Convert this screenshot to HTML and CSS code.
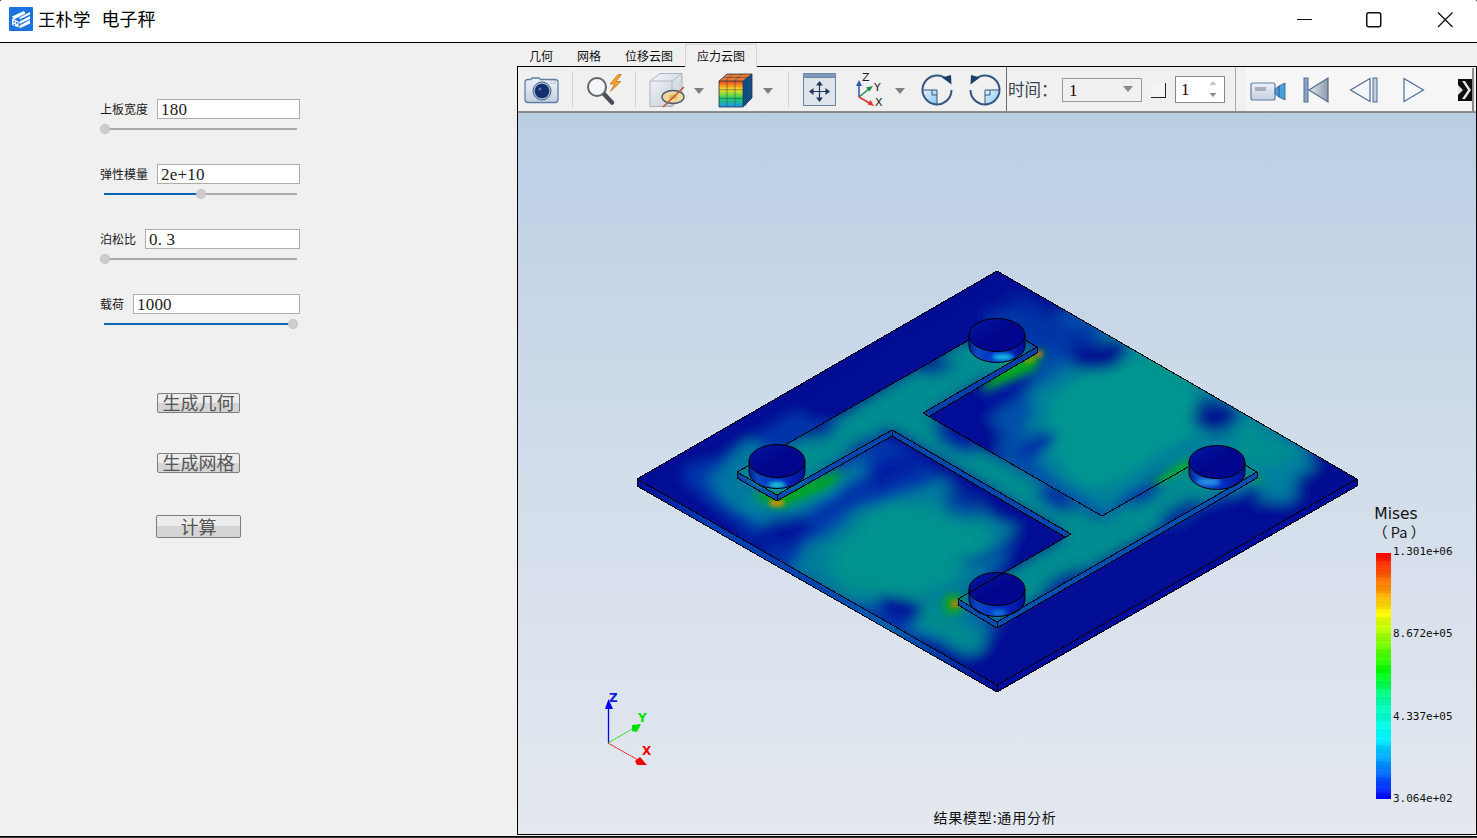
FILE: index.html
```html
<!DOCTYPE html>
<html lang="zh">
<head>
<meta charset="utf-8">
<title>王朴学 电子秤</title>
<link rel="stylesheet" href="styles.css">
</head>
<body>
<div class="window">
  <header class="titlebar">
    <svg class="logo" width="24" height="24" viewBox="0 0 24 24">
      <rect width="24" height="24" rx="1" fill="#1a73e0"/>
      <path d="M3 9.500 15 4l1.500 2.500L5 12.500z" fill="#fff"/>
      <path d="M3 11.500l6.500 3v6L3 18z" fill="#fff"/>
      <path d="M10.500 14.500 21 9v3l-10.500 5z" fill="#fff"/>
      <path d="M10.500 10.500 21 5v2.500l-10.500 5z" fill="#fff"/>
      <path d="M10.500 18.500 21 13v3.500l-10.500 5z" fill="#fff"/>
      <path d="M4.500 13.500l1.500.8v1.600l-1.500-.8zM7 14.800l1.500.8v1.600L7 16.400zM4.500 16.500l1.500.8v1.400l-1.500-.8z" fill="#1a73e0"/>
    </svg>
    <h1 class="title"><span>王朴学</span><span class="title-app">电子秤</span></h1>
    <div class="winbtns">
      <svg class="winbtn" width="71" height="42" viewBox="0 0 71 42"><path d="M28 19.500h15" stroke="#111" fill="none"/></svg>
      <svg class="winbtn" width="71" height="42" viewBox="0 0 71 42"><rect x="26.750" y="12.750" width="14" height="14" rx="2" stroke="#111" stroke-width="1.500" fill="none"/></svg>
      <svg class="winbtn" width="71" height="42" viewBox="0 0 71 42"><path d="M27 12.500 41.500 27M41.500 12.500 27 27" stroke="#111" stroke-width="1.300" fill="none"/></svg>
    </div>
  </header>

  <main class="content">
    <section class="form">
      <div class="param">
        <div class="param-row"><label class="param-label">上板宽度</label><div class="param-input">180</div></div>
        <div class="slider" style="--v:0"><div class="slider-fill"></div><div class="slider-knob"></div></div>
      </div>
      <div class="param">
        <div class="param-row"><label class="param-label">弹性模量</label><div class="param-input">2e+10</div></div>
        <div class="slider" style="--v:.51"><div class="slider-fill"></div><div class="slider-knob"></div></div>
      </div>
      <div class="param">
        <div class="param-row"><label class="param-label">泊松比</label><div class="param-input">0.&nbsp;3</div></div>
        <div class="slider" style="--v:0"><div class="slider-fill"></div><div class="slider-knob"></div></div>
      </div>
      <div class="param">
        <div class="param-row"><label class="param-label">载荷</label><div class="param-input">1000</div></div>
        <div class="slider" style="--v:1"><div class="slider-fill"></div><div class="slider-knob"></div></div>
      </div>
      <div class="actions">
        <button class="action">生成几何</button>
        <button class="action">生成网格</button>
        <button class="action action-wide">计算</button>
      </div>
    </section>

    <section class="results">
      <nav class="tabs">
        <span class="tab">几何</span><span class="tab">网格</span><span class="tab tab-long">位移云图</span><span class="tab tab-long tab-active">应力云图</span>
      </nav>
      <div class="frame">
        <div class="toolbar">
          <!-- camera -->
          <svg class="tool" width="54" height="44" viewBox="518 67 54 44">
            <defs>
              <linearGradient id="gBody" x1="0" y1="0" x2="0" y2="1"><stop offset="0" stop-color="#eef2f8"/><stop offset="1" stop-color="#c4d0e0"/></linearGradient>
              <linearGradient id="gFace" x1="0" y1="0" x2="1" y2="1"><stop offset="0" stop-color="#f4f5f7"/><stop offset="1" stop-color="#c2cad6"/></linearGradient>
              <linearGradient id="gHot" x1="0" y1="0" x2="0" y2="1"><stop offset="0" stop-color="#f04020"/><stop offset=".33" stop-color="#f8e020"/><stop offset=".66" stop-color="#20d060"/><stop offset="1" stop-color="#2090f0"/></linearGradient>
              <linearGradient id="gTri" x1="0" y1="0" x2="1" y2="0"><stop offset="0" stop-color="#e4e8ee"/><stop offset="1" stop-color="#8f9aa8"/></linearGradient>
              <linearGradient id="gSky" x1="0" y1="0" x2="1" y2="1"><stop offset="0" stop-color="#e6f3fc"/><stop offset="1" stop-color="#86c4ec"/></linearGradient>
            </defs>
            <path d="M525 82.500q0-3 3-3h3l1-1.500h7l1.500 1.500h14.500q3 0 3 3v17q0 3-3 3h-27q-3 0-3-3z" fill="url(#gBody)" stroke="#5f7ea6" stroke-width="1.300"/>
            <rect x="551" y="81" width="4" height="2.500" fill="#fff" stroke="#8ea2bd" stroke-width=".6"/>
            <circle cx="542" cy="91" r="9" fill="#aebdd2" stroke="#41608f" stroke-width="1"/>
            <circle cx="542" cy="91" r="7.300" fill="#14306c"/>
            <circle cx="540" cy="89" r="1.500" fill="#5577aa"/>
          </svg>
          <span class="tool-sep"></span>
          <!-- magnifier -->
          <svg class="tool" width="62" height="44" viewBox="573 67 62 44">
            <path d="M603.500 93.500 612 102.500" stroke="#4b4f55" stroke-width="4.500" stroke-linecap="round"/>
            <circle cx="597" cy="87" r="9" fill="#f5f6f8" stroke="#61666c" stroke-width="2"/>
            <path d="M618 74.500 610 84h4.500l-4 7.500 10.500-10h-5l5.500-7z" fill="#f0a030" stroke="#c87a10" stroke-width=".8"/>
          </svg>
          <span class="tool-sep"></span>
          <!-- section cube -->
          <svg class="tool" width="76" height="44" viewBox="636 67 76 44">
            <path d="M650 81 660 73.500h22v24L672 106.500h-22z" fill="url(#gFace)" stroke="#a9b2be"/>
            <path d="M650 81h22l10-7.500M672 81v25.500" fill="none" stroke="#b2bac6"/>
            <ellipse cx="673" cy="97" rx="11" ry="6.500" fill="#f0d898" stroke="#44587c" stroke-width="1.300"/>
            <ellipse cx="673" cy="97" rx="4" ry="2.500" fill="#d8b860"/>
            <path d="M663 107 684 87" stroke="#c8502a" stroke-width="1.500"/>
            <path d="M694 88h10l-5 6z" fill="#7c7f84"/>
          </svg>
          <!-- colour cube -->
          <svg class="tool" width="76" height="44" viewBox="712 67 76 44">
            <path d="M719 81h24v26h-24z" fill="url(#gHot)"/>
            <path d="M719 81 727 74h25l-9 7z" fill="#ea7a30"/>
            <path d="M743 81 752 74v24l-9 9z" fill="#10508a"/>
            <path d="M727 81v26M735 81v26M719 89.700h24M719 98.300h24M724 77.500h24M733 74l-8 7M742 74l-8 7M746 87.500l6-6M746 80v26M746 96l6-6" stroke="#2a3a50" stroke-width=".5" fill="none"/>
            <path d="M719 81h24v26h-24zM719 81 727 74h25v24l-9 9M743 81l9-7" fill="none" stroke="#25344a" stroke-width=".8"/>
            <path d="M763 88h10l-5 6z" fill="#7c7f84"/>
          </svg>
          <span class="tool-sep"></span>
          <!-- fit -->
          <svg class="tool" width="58" height="44" viewBox="789 67 58 44">
            <rect x="803.500" y="73.500" width="32" height="32" fill="#dfe3ea" stroke="#6c84a6"/>
            <rect x="803.500" y="73.500" width="32" height="4" fill="#7f98bb" stroke="#6c84a6"/>
            <path d="M812 91.500h15M819.500 84v15" stroke="#23395c" stroke-width="1.200"/>
            <path d="M819.500 81 823 85.500h-7zM819.500 102 823 97.500h-7zM809 91.500 813.500 88v7zM830 91.500 825.500 88v7z" fill="#23395c"/>
          </svg>
          <!-- axes -->
          <svg class="tool" width="68" height="44" viewBox="847 67 68 44">
            <path d="M859 97V84" stroke="#2a58b0" stroke-width="1.500"/><path d="M859 80l-3 6h6z" fill="#2a58b0"/>
            <path d="M859 97 869 89" stroke="#1b8a4a" stroke-width="1.500"/><path d="M873 86l-7 1.500 3.500 4z" fill="#1b8a4a"/>
            <path d="M859 97 870 103.500" stroke="#e03030" stroke-width="1.500"/><path d="M874 106l-3.500-6-3 4.500z" fill="#e03030"/>
            <text x="862" y="81" class="tool-axis">Z</text><text x="874" y="91" class="tool-axis">Y</text><text x="875" y="106" class="tool-axis">X</text>
            <path d="M895 88h10l-5 6z" fill="#7c7f84"/>
          </svg>
          <!-- rotate cw -->
          <svg class="tool" width="46" height="44" viewBox="915 67 46 44">
            <path d="M937 90H922.500A14.500 14.500 0 0 0 937 104.500z" fill="url(#gSky)"/>
            <path d="M946.500 79A14.500 14.500 0 1 0 951.500 90" fill="none" stroke="#35567f" stroke-width="2"/>
            <path d="M922.500 90H937V104.500M932 90v5h5" fill="none" stroke="#35567f" stroke-width="1"/>
            <path d="M951.500 84.500 951 75 942 77.500z" fill="#1f3d6b"/>
          </svg>
          <!-- rotate ccw -->
          <svg class="tool" width="45" height="44" viewBox="961 67 45 44">
            <path d="M985 90H999.500A14.500 14.500 0 0 1 985 104.500z" fill="url(#gSky)"/>
            <path d="M975.500 79A14.500 14.500 0 1 1 970.500 90" fill="none" stroke="#35567f" stroke-width="2"/>
            <path d="M999.500 90H985V104.500M990 90v5h-5" fill="none" stroke="#35567f" stroke-width="1"/>
            <path d="M970.500 84.500 971 75 980 77.500z" fill="#1f3d6b"/>
          </svg>
          <span class="tool-sep tool-sep-dark"></span>
          <span class="time-label">时间：</span>
          <div class="combo">1<svg class="combo-arrow" width="10" height="6" viewBox="0 0 10 6"><path d="M0 0h10L5 6z" fill="#85888c"/></svg></div>
          <span class="check"></span>
          <div class="spin">1<svg class="spin-arrows" width="8" height="18" viewBox="0 0 8 18"><path d="M4 1 7.500 5h-7z" fill="#c4c4c4"/><path d="M4 17 7.500 13h-7z" fill="#8c8c8c"/></svg></div>
          <span class="tool-sep tool-sep-last"></span>
          <div class="player">
            <svg width="226" height="43" viewBox="1246 68 226 43">
              <defs><filter id="bMore"><feGaussianBlur stdDeviation=".7"/></filter></defs>
              <rect x="1251" y="83" width="24" height="17" rx="2" fill="url(#gBody)" stroke="#5f7ea6" stroke-width="1.200"/>
              <rect x="1255" y="87" width="11" height="4" fill="#a9b0ba"/>
              <path d="M1275 89 1279 86v11l-4-3zM1279 86 1285 83v17l-6-3z" fill="#4aa0d8" stroke="#3a6a9c" stroke-width=".9"/>
              <rect x="1304" y="78" width="4" height="24" fill="#8ea4c2" stroke="#4f6c93"/>
              <path d="M1309 90 1328 78v24z" fill="url(#gTri)" stroke="#4f6c93" stroke-width="1.200"/>
              <path d="M1350.500 90 1370 78.500v23z" fill="#f4f6f9" stroke="#4f6c93" stroke-width="1.200"/>
              <rect x="1373" y="78" width="4" height="24" fill="#c4d0e0" stroke="#4f6c93"/>
              <path d="M1404 78.500 1423.500 90 1404 101.500z" fill="#f4f6f9" stroke="#4f6c93" stroke-width="1.200"/>
              <g filter="url(#bMore)">
                <rect x="1458" y="79" width="14" height="22" fill="#0a0a0a"/>
                <path d="M1458 85 1463 90 1458 95zM1462 81 1468 90 1462 99 1465 99 1471 90 1465 81z" fill="#e4e4e4"/>
              </g>
            </svg>
          </div>
        </div>

        <div class="viewport">
          <svg class="scene" width="957" height="721" viewBox="518 113 957 721">
            <defs>
              <clipPath id="cPlate"><path d="M997 271 1357 479 997 685 637 479z"/></clipPath>
              <clipPath id="cTrace"><path d="M785 445 969 340 1025 340 1037 347 923 413 1102 516 1188 467 1245 465 1257 472 997 622 958 599 1071 534 892 430 777 495 737 472z"/></clipPath>
              <filter id="cloud" x="-10%" y="-10%" width="120%" height="120%">
                <feTurbulence type="fractalNoise" baseFrequency=".014 .026" numOctaves="2" seed="7" result="n"/>
                <feGaussianBlur in="SourceGraphic" stdDeviation="5" result="b"/>
                <feDisplacementMap in="b" in2="n" scale="26" xChannelSelector="R" yChannelSelector="G" result="d"/>
                <feGaussianBlur in="d" stdDeviation="5"/>
              </filter>
              <filter id="b8" x="-50%" y="-50%" width="200%" height="200%"><feGaussianBlur stdDeviation="7"/></filter>
              <filter id="b4" x="-50%" y="-50%" width="200%" height="200%"><feGaussianBlur stdDeviation="4"/></filter>
              <filter id="b2" x="-50%" y="-50%" width="200%" height="200%"><feGaussianBlur stdDeviation="2"/></filter>
              <linearGradient id="gLeftEdge" x1="0" y1="0" x2="1" y2="0">
                <stop offset="0" stop-color="#000c98"/><stop offset=".2" stop-color="#0040b8"/><stop offset=".5" stop-color="#0044b0"/><stop offset=".7" stop-color="#0060b0"/><stop offset="1" stop-color="#000c9c"/>
              </linearGradient>
              <linearGradient id="gCyl" x1="0" y1="0" x2="1" y2="0">
                <stop offset="0" stop-color="#002098"/><stop offset=".15" stop-color="#0a48c0"/><stop offset=".5" stop-color="#0030c8"/><stop offset=".85" stop-color="#001aa8"/><stop offset="1" stop-color="#000c90"/>
              </linearGradient>
              <linearGradient id="gCap" x1="0" y1="0" x2="1" y2="1">
                <stop offset="0" stop-color="#0018a0"/><stop offset=".5" stop-color="#00068c"/><stop offset="1" stop-color="#000890"/>
              </linearGradient>
            </defs>

            <path d="M637 479 997 685V692L637 486z" fill="url(#gLeftEdge)"/>
            <path d="M997 685 1357 479V486L997 692z" fill="#000c9c"/>

            <!-- plate stress field -->
            <g clip-path="url(#cPlate)">
              <g filter="url(#cloud)">
                <rect x="600" y="240" width="790" height="480" fill="#000a94"/>
                <!-- mid blue -->
                <path d="M680 480 790 415 900 440 1000 540 1010 650 900 640 790 570z" fill="#0034aa"/>
                <path d="M985 345 1080 305 1180 355 1310 445 1215 505 1100 535 1000 470z" fill="#0050a8"/>
                <path d="M1015 300 1100 330 1040 365 985 320z" fill="#0034a8"/>
                <!-- blue-teal -->
                <path d="M1030 395 1120 315 1205 355 1310 450 1240 478 1180 475 1100 510 1020 445z" fill="#00809a"/>
                <path d="M805 545 880 495 935 485 1020 530 970 595 900 618 790 575z" fill="#007c9a"/>
                <path d="M790 560 880 605 960 650 1008 642 965 598 880 578z" fill="#007c9a"/>
                <path d="M708 484 745 440 810 465 870 462 810 516 760 530z" fill="#0078a0"/>
                <path d="M1238 436 1310 456 1290 500 1230 515z" fill="#0080a0"/>
                <!-- teal core -->
                <path d="M1045 412 1105 350 1180 372 1210 425 1150 462 1085 482 1038 442z" fill="#009690"/>
                <path d="M1120 322 1160 340 1225 388 1170 385z" fill="#00928e"/>
                <path d="M1235 420 1300 450 1265 475 1228 465z" fill="#008e90"/>
                <path d="M828 548 890 502 950 505 998 535 950 585 890 600 822 572z" fill="#00928e"/>
                <path d="M825 582 880 596 950 638 990 642 950 608 880 585z" fill="#008a8e"/>
                <path d="M740 502 790 516 868 468 800 478z" fill="#008e90"/>
                <!-- cold spots -->
                <ellipse cx="1098" cy="350" rx="32" ry="14" transform="rotate(-12 1098 350)" fill="#000a90"/>
                <ellipse cx="1218" cy="418" rx="28" ry="13" transform="rotate(-8 1218 418)" fill="#000a90"/>
                <ellipse cx="1330" cy="480" rx="36" ry="19" fill="#000a90"/>
                <ellipse cx="897" cy="605" rx="24" ry="12" transform="rotate(20 897 605)" fill="#000a98"/>
                <ellipse cx="785" cy="533" rx="30" ry="10" transform="rotate(-18 785 533)" fill="#000a98"/>
                <ellipse cx="895" cy="466" rx="34" ry="10" transform="rotate(-28 895 466)" fill="#001aa2"/>
                <ellipse cx="962" cy="507" rx="20" ry="6" transform="rotate(24 962 507)" fill="#001aa2"/>
                <ellipse cx="985" cy="555" rx="30" ry="5" transform="rotate(-28 985 555)" fill="#0014a0"/>
                <ellipse cx="1035" cy="445" rx="24" ry="9" transform="rotate(-24 1035 445)" fill="#0020a4"/>
                <ellipse cx="1140" cy="490" rx="34" ry="6" transform="rotate(-28 1140 490)" fill="#0020a4"/>
                <ellipse cx="985" cy="405" rx="50" ry="12" transform="rotate(-28 985 405)" fill="#000e9a"/>
                <ellipse cx="1068" cy="608" rx="115" ry="25" transform="rotate(-30 1068 608)" fill="#000a94"/>
                <ellipse cx="1195" cy="535" rx="80" ry="19" transform="rotate(-30 1195 535)" fill="#000a94"/>
                <path d="M790 400 900 340 990 290 1000 270 770 395z" fill="#000a90"/>
              </g>
              <g filter="url(#b4)">
                <path d="M752 494 778 508 832 484 845 470 790 488z" fill="#00a818"/>
                <path d="M1046 348 1034 370 980 392 1000 368z" fill="#00a818"/>
                <ellipse cx="953" cy="604" rx="9" ry="10" fill="#12a810"/>
                <path d="M1150 484 1188 458 1192 472 1170 486z" fill="#00a830"/>
                <ellipse cx="1258" cy="480" rx="5" ry="4" fill="#10a040"/>
                <ellipse cx="1190" cy="478" rx="5" ry="7" fill="#00a040"/>
                <path d="M968 350 1000 368 1025 360 1000 350z" fill="#00a070"/>
              </g>
              <g filter="url(#b2)">
                <ellipse cx="777" cy="503" rx="8" ry="3.500" fill="#d09000"/>
                <ellipse cx="955" cy="604" rx="3" ry="3.500" fill="#e07010"/>
                <ellipse cx="1039" cy="354" rx="3.500" ry="3" fill="#e07010"/>
                <ellipse cx="1030" cy="360" rx="6" ry="3" transform="rotate(-30 1030 360)" fill="#80a000"/>
              </g>
            </g>

            <!-- raised trace -->
            <g clip-path="url(#cTrace)">
              <g filter="url(#b8)">
                <path d="M730 470 800 440 960 340 1040 345 930 415 1100 520 1190 465 1260 470 997 625 960 600 1065 535 890 430 777 500z" fill="#008c90"/>
                <ellipse cx="816" cy="430" rx="22" ry="8" transform="rotate(-10 816 430)" fill="#000e96"/>
                <ellipse cx="936" cy="366" rx="18" ry="7" transform="rotate(-10 936 366)" fill="#000e96"/>
                <ellipse cx="862" cy="447" rx="18" ry="6" transform="rotate(-30 862 447)" fill="#000e96"/>
                <ellipse cx="955" cy="440" rx="24" ry="9" transform="rotate(28 955 440)" fill="#001aa0"/>
                <ellipse cx="1055" cy="500" rx="20" ry="8" transform="rotate(28 1055 500)" fill="#001aa0"/>
                <ellipse cx="1063" cy="582" rx="22" ry="7" transform="rotate(-30 1063 582)" fill="#000e96"/>
                <ellipse cx="1180" cy="512" rx="24" ry="7" transform="rotate(-30 1180 512)" fill="#000e96"/>
                <ellipse cx="1145" cy="495" rx="16" ry="6" transform="rotate(-30 1145 495)" fill="#001aa0"/>
              </g>
            </g>

            <!-- walls -->
            <path d="M737 472 777 495 892 430 1071 534 1065 537.500 892 436 777 501 737 478z" fill="#0048b0"/>
            <path d="M958 599 997 622 1257 472V478L997 628 958 605z" fill="#0050b4"/>
            <path d="M1037 347 923 413 929 416.500 1037 353z" fill="#0040ac"/>

            <!-- cylinders -->
            <g transform="translate(777 461)">
              <ellipse cx="0" cy="12" rx="31" ry="18" fill="#0080a0" filter="url(#b2)"/>
              <path d="M-28 0V11A28 16.500 0 0 0 28 11V0z" fill="url(#gCyl)"/>
              <ellipse cx="0" cy="24" rx="9" ry="3" fill="#20d8d8" filter="url(#b2)"/>
              <ellipse cx="0" cy="0" rx="28" ry="16.500" fill="url(#gCap)" stroke="#000"/>
              <path d="M-28 0V11A28 16.500 0 0 0 28 11V0" fill="none" stroke="#000"/>
            </g>
            <g transform="translate(997 335)">
              <path d="M-28 0V11A28 16.500 0 0 0 28 11V0z" fill="url(#gCyl)"/>
              <ellipse cx="6" cy="22" rx="11" ry="3.500" fill="#18c0e8" filter="url(#b2)"/>
              <ellipse cx="0" cy="0" rx="28" ry="16.500" fill="url(#gCap)" stroke="#000"/>
              <path d="M-28 0V11A28 16.500 0 0 0 28 11V0" fill="none" stroke="#000"/>
            </g>
            <g transform="translate(1217 462)">
              <path d="M-28 0V11A28 16.500 0 0 0 28 11V0z" fill="url(#gCyl)"/>
              <ellipse cx="-8" cy="20" rx="12" ry="3.500" fill="#30a8e8" opacity=".85" filter="url(#b2)"/>
              <ellipse cx="0" cy="0" rx="28" ry="16.500" fill="url(#gCap)" stroke="#000"/>
              <path d="M-28 0V11A28 16.500 0 0 0 28 11V0" fill="none" stroke="#000"/>
            </g>
            <g transform="translate(997 589)">
              <path d="M-28 0V11A28 16.500 0 0 0 28 11V0z" fill="url(#gCyl)"/>
              <ellipse cx="2" cy="24" rx="8" ry="2.500" fill="#20b0e0" opacity=".7" filter="url(#b2)"/>
              <ellipse cx="0" cy="0" rx="28" ry="16.500" fill="url(#gCap)" stroke="#000"/>
              <path d="M-28 0V11A28 16.500 0 0 0 28 11V0" fill="none" stroke="#000"/>
            </g>

            <!-- edges -->
            <g class="edges">
              <path d="M637 479 997 271 1357 479 997 685z"/>
              <path d="M637 479V486L997 692 1357 486V479M997 685V692"/>
              <path d="M750 465 737 472 777 495 892 430 1071 534 1005 572 958 599 997 622 1257 472 1245 465"/>
              <path d="M737 472V478L777 501 892 436 1065 537M892 430V436M777 495V501M958 599V605L997 628 1257 478V472M997 622V628"/>
              <path d="M785 445 969 340M1025 340 1037 347V353L929 416.500M1037 347 923 413 1102 516 1188 467"/>
            </g>

            <!-- triad -->
            <g class="triad">
              <path d="M608.500 743V705" stroke="#0000f0" stroke-width="1.300"/>
              <path d="M608.500 699 605 709h8z" fill="#0000f0"/>
              <path d="M608 743 634 728" stroke="#00e000" stroke-width="1" stroke-dasharray="2 .5"/>
              <path d="M632 725 641 724 637 732 632 731z" fill="#00e000"/>
              <path d="M608 743 638 760" stroke="#f00000" stroke-width="1" stroke-dasharray="2 .5"/>
              <path d="M640 757 647 765H637L635 761z" fill="#f00000"/>
              <text x="609" y="702" fill="#1020e0">Z</text>
              <text x="638" y="722" fill="#00e000">Y</text>
              <text x="642" y="755" fill="#f00000">X</text>
            </g>
          </svg>

          <div class="legend">
            <div class="legend-title">Mises<br><span class="legend-unit">（ Pa ）</span></div>
            <div class="legend-scale">
              <div class="legend-bar"></div>
              <ul class="legend-ticks">
                <li>1.301e+06</li><li>8.672e+05</li><li>4.337e+05</li><li>3.064e+02</li>
              </ul>
            </div>
          </div>
          <div class="model-name">结果模型:通用分析</div>
        </div>
      </div>
    </section>
  </main>
</div>
</body>
</html>
```

FILE: styles.css
```css
* { box-sizing: border-box; }
html, body { margin: 0; padding: 0; height: 100%; }
body {
  background: #333;
  font-family: "Noto Sans CJK SC", "Liberation Sans", sans-serif;
  overflow: hidden;
}
.window {
  width: 1477px;
  height: 837px;
  display: flex;
  flex-direction: column;
  background: #f0f0f0;
  border-radius: 3px 3px 0 0;
  border-bottom: 1px solid #000;
  overflow: hidden;
}

/* title bar */
.titlebar {
  flex: 0 0 43px;
  display: flex;
  align-items: flex-start;
  background: #fff;
  border-bottom: 1px solid #000;
}
.logo { margin: 7px 0 0 9px; flex: none; }
.title {
  margin: 5px 0 0 5px;
  display: flex;
  gap: 11px;
  font-size: 17.500px;
  font-weight: 400;
  line-height: 27px;
  color: #000;
}
.title-app { font-size: 18px; }
.winbtns { margin-left: auto; margin-right: -5px; display: flex; flex: none; }
.winbtn { display: block; }

.content { flex: 1; display: flex; min-height: 0; }

/* left form */
.form {
  flex: 0 0 517px;
  padding: 56px 0 0 100px;
}
.param { height: 65px; width: 200px; }
.param-row { display: flex; align-items: center; gap: 9px; height: 20px; }
.param-label { font-size: 12px; line-height: 20px; color: #1a1a1a; white-space: nowrap; }
.param-input {
  flex: 1;
  height: 20px;
  background: #fff;
  border: 1px solid #adadad;
  padding-left: 3px;
  font-family: "Liberation Serif", serif;
  font-size: 17px;
  letter-spacing: .2px;
  line-height: 20px;
  color: #222;
  white-space: pre;
}
.slider { position: relative; height: 10px; margin-top: 5px; width: 198px; }
.slider::before {
  content: "";
  position: absolute;
  left: 4px;
  right: 1px;
  top: 4px;
  height: 2px;
  background: #aaa;
}
.slider-fill {
  position: absolute;
  left: 4px;
  top: 4px;
  height: 2px;
  width: calc(var(--v) * 188px + 1px);
  background: #0a66b8;
}
.slider-knob {
  position: absolute;
  top: 0;
  left: calc(var(--v) * 188px);
  width: 10px;
  height: 10px;
  border-radius: 50%;
  background: #cdcdcd;
  border: 1px dotted #b8b8b8;
}
.actions {
  display: flex;
  flex-direction: column;
  align-items: flex-start;
  margin-top: 34px;
  padding-left: 57px;
}
.action {
  width: 83px;
  height: 20px;
  margin: 0 0 40px;
  padding: 0 0 2px;
  border: 1px solid #7d7d7d;
  border-radius: 2px;
  background: linear-gradient(#ececec 0 50%, #d4d4d4 50% 100%);
  font-family: "Noto Sans CJK SC", sans-serif;
  font-size: 18px;
  line-height: 16px;
  color: #555;
  white-space: nowrap;
}
.action:nth-child(2) { margin-bottom: 42px; }
.action-wide { width: 85px; height: 23px; margin: 0 0 0 -1px; }

/* right */
.results { flex: 1; display: flex; flex-direction: column; min-width: 0; }
.tabs { flex: 0 0 23px; display: flex; align-items: flex-end; position: relative; }
.tab {
  width: 48px;
  height: 21px;
  text-align: center;
  font-size: 12px;
  line-height: 21px;
  color: #111;
  position: relative;
}
.tab-long { width: 72px; }
.tab-active {
  height: 23px;
  line-height: 22px;
  top: 1px;
  background: #f0f0f0;
  border: 1px solid #d4d4d4;
  border-bottom: 0;
  z-index: 1;
}
.frame {
  flex: 1;
  display: flex;
  flex-direction: column;
  min-height: 0;
  margin: 0 0 1px 0;
  border: 1px solid #000;
  background: #f0f0f0;
}
.toolbar {
  flex: 0 0 46px;
  min-height: 0;
  display: flex;
  align-items: flex-start;
  background: #f0f0f0;
  border-bottom: 2px solid #8c8c8c;
  position: relative;
}
.tool { display: block; flex: none; }
.tool-sep {
  flex: none;
  width: 1px;
  height: 36px;
  margin-top: 4px;
  background: #d0d0d0;
}
.tool-sep-dark { height: 44px; margin-top: 0; background: #6c6c6c; }
.tool-axis { font-family: "DejaVu Sans", sans-serif; font-size: 11px; fill: #222; }
.time-label {
  margin: 1px 0 0 1px;
  width: 54px;
  flex: none;
  font-size: 16.500px;
  line-height: 43px;
  color: #3b4550;
  white-space: nowrap;
}
.combo {
  flex: none;
  width: 80px;
  height: 24px;
  margin-top: 11px;
  border: 1px solid #989898;
  padding-left: 6px;
  font-family: "Liberation Serif", serif;
  font-size: 17px;
  line-height: 23px;
  color: #300;
  position: relative;
}
.combo-arrow { position: absolute; right: 8px; top: 7px; }
.check {
  flex: none;
  width: 15px;
  height: 15px;
  margin: 16px 0 0 9px;
  background: #f4f4f4;
  border-right: 1px solid #222;
  border-bottom: 1px solid #222;
}
.spin {
  flex: none;
  width: 50px;
  height: 27px;
  margin: 9px 0 0 9px;
  background: #fff;
  border: 1px solid #888;
  padding-left: 5px;
  font-family: "Liberation Serif", serif;
  font-size: 17px;
  line-height: 26px;
  color: #300;
  position: relative;
}
.spin-arrows { position: absolute; right: 7px; top: 3px; }
.tool-sep-last { height: 44px; margin: 0 0 0 10px; background: #aaa; }
.player {
  flex: none;
  width: 228px;
  height: 43px;
  margin: 1px 0 0 10px;
  background: #f6f6f6;
  border-right: 2px solid #8c8c8c;
}
.player svg { display: block; }

/* viewport */
.viewport {
  flex: 1;
  position: relative;
  overflow: hidden;
  background: linear-gradient(#bacee4 0%, #d0dcea 45%, #e4e8ef 100%);
}
.scene { position: absolute; left: 0; top: 0; }
.edges path {
  fill: none;
  stroke: #000;
  stroke-width: 1;
  shape-rendering: crispEdges;
}
.triad text {
  font-family: "DejaVu Sans", sans-serif;
  font-weight: 700;
  font-size: 12px;
}
.legend { position: absolute; left: 855px; top: 393px; width: 111px; }
.legend-title {
  width: 46px;
  text-align: center;
  font-family: "DejaVu Sans", sans-serif;
  font-size: 15.500px;
  line-height: 17px;
  color: #111;
  white-space: nowrap;
}
.legend-unit {
  display: inline-block;
  margin-right: 8px;
  font-family: "Noto Sans CJK SC", sans-serif;
  font-size: 14.500px;
}
.legend-scale { display: flex; margin-top: 11px; margin-left: 1px; }
.legend-bar {
  width: 15px;
  height: 246px;
  margin-left: 2px;
  background:
    repeating-linear-gradient(rgba(0,0,0,.04) 0 8px, rgba(255,255,255,.04) 8px 16px),
    linear-gradient(#f00 0%, #ff7a00 12%, #ff0 25%, #0f0 48%, #0fa 60%, #0ff 74%, #0090ff 86%, #00f 100%);
}
.legend-ticks {
  list-style: none;
  margin: -9px 0 0 2px;
  padding: 0;
  height: 262px;
  display: flex;
  flex-direction: column;
  justify-content: space-between;
  font-family: "DejaVu Sans Mono", monospace;
  font-size: 11px;
  line-height: 15px;
  color: #111;
}
.model-name {
  position: absolute;
  left: 0;
  right: 4px;
  bottom: 7px;
  text-align: center;
  font-size: 14px;
  line-height: 20px;
  letter-spacing: .8px;
  color: #111;
}
```
